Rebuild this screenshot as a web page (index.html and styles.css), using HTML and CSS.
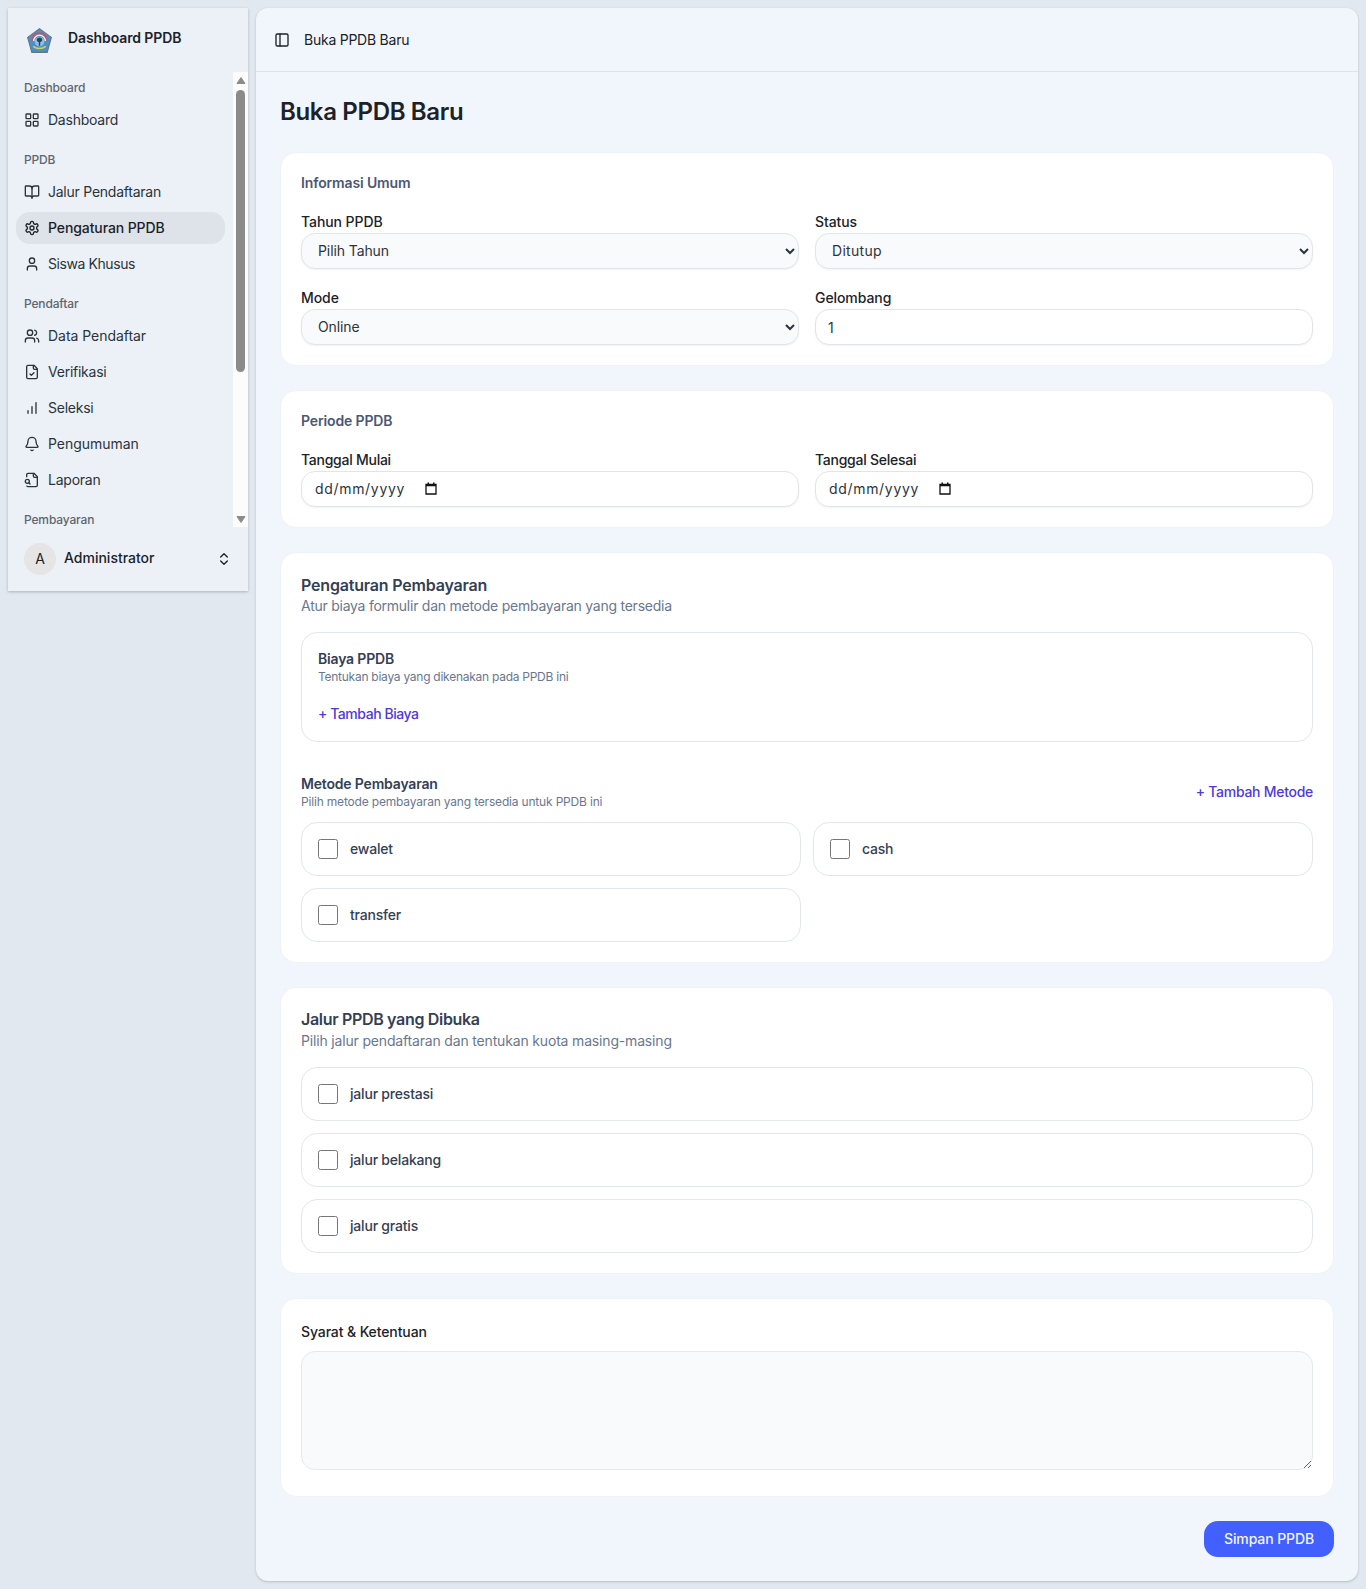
FILE: index.html
```html
<!DOCTYPE html>
<html lang="id">
<head>
<meta charset="utf-8">
<title>Buka PPDB Baru</title>
<link rel="stylesheet" href="styles.css">
</head>
<body>
<div class="app">
  <aside class="sidebar">
    <div class="brand">
      <svg class="brand-logo" viewBox="0 0 24 24"><path d="M12 .6 23.4 9 19.4 23.4H4.6L.6 9Z" fill="#4f8fc4" stroke="#65747f" stroke-width="1"/><path d="M5 12a7 7 0 0 1 14 0" fill="none" stroke="#c8525f" stroke-width="1.7"/><path d="M6.4 12.5a5.6 5.6 0 0 1 11.2 0" fill="none" stroke="#eef3f8" stroke-width="1.3"/><circle cx="12" cy="13" r="4.6" fill="#8fc1e6"/><path d="M12 9c2 0 2.800 1.300 2.600 2.800-.2 1.200-1.200 1.600-1.900 1.700V17h-1.400v-3.500c-.8-.1-1.700-.5-1.900-1.700C9.200 10.300 10 9 12 9Z" fill="#214a55"/><path d="M6 17.600c3.500 2.800 8.500 2.800 12 0" fill="none" stroke="#c5d75d" stroke-width="1.500"/></svg>
      <span class="brand-name">Dashboard PPDB</span>
    </div>
    <div class="nav-wrap">
      <nav class="nav">
        <section class="group">
          <h2 class="group-label">Dashboard</h2>
          <a class="item"><svg class="icon" viewBox="0 0 24 24"><rect width="7" height="7" x="3" y="3" rx="1"/><rect width="7" height="7" x="14" y="3" rx="1"/><rect width="7" height="7" x="14" y="14" rx="1"/><rect width="7" height="7" x="3" y="14" rx="1"/></svg><span>Dashboard</span></a>
        </section>
        <section class="group">
          <h2 class="group-label">PPDB</h2>
          <a class="item"><svg class="icon" viewBox="0 0 24 24"><path d="M12 7v14"/><path d="M3 18a1 1 0 0 1-1-1V4a1 1 0 0 1 1-1h5a4 4 0 0 1 4 4 4 4 0 0 1 4-4h5a1 1 0 0 1 1 1v13a1 1 0 0 1-1 1h-6a3 3 0 0 0-3 3 3 3 0 0 0-3-3z"/></svg><span>Jalur Pendaftaran</span></a>
          <a class="item active"><svg class="icon" viewBox="0 0 24 24"><path d="M12.220 2h-.44a2 2 0 0 0-2 2v.18a2 2 0 0 1-1 1.730l-.43.25a2 2 0 0 1-2 0l-.15-.08a2 2 0 0 0-2.730.730l-.22.38a2 2 0 0 0 .73 2.730l.15.1a2 2 0 0 1 1 1.720v.51a2 2 0 0 1-1 1.740l-.15.09a2 2 0 0 0-.73 2.730l.22.38a2 2 0 0 0 2.730.73l.15-.08a2 2 0 0 1 2 0l.43.25a2 2 0 0 1 1 1.730V20a2 2 0 0 0 2 2h.44a2 2 0 0 0 2-2v-.18a2 2 0 0 1 1-1.730l.43-.25a2 2 0 0 1 2 0l.15.08a2 2 0 0 0 2.730-.73l.22-.39a2 2 0 0 0-.73-2.730l-.15-.08a2 2 0 0 1-1-1.740v-.5a2 2 0 0 1 1-1.740l.15-.09a2 2 0 0 0 .73-2.730l-.22-.38a2 2 0 0 0-2.730-.73l-.15.08a2 2 0 0 1-2 0l-.43-.25a2 2 0 0 1-1-1.730V4a2 2 0 0 0-2-2z"/><circle cx="12" cy="12" r="3"/></svg><span>Pengaturan PPDB</span></a>
          <a class="item"><svg class="icon" viewBox="0 0 24 24"><path d="M19 21v-2a4 4 0 0 0-4-4H9a4 4 0 0 0-4 4v2"/><circle cx="12" cy="7" r="4"/></svg><span class="tight">Siswa Khusus</span></a>
        </section>
        <section class="group">
          <h2 class="group-label">Pendaftar</h2>
          <a class="item"><svg class="icon" viewBox="0 0 24 24"><path d="M16 21v-2a4 4 0 0 0-4-4H6a4 4 0 0 0-4 4v2"/><circle cx="9" cy="7" r="4"/><path d="M22 21v-2a4 4 0 0 0-3-3.870"/><path d="M16 3.130a4 4 0 0 1 0 7.750"/></svg><span class="loose">Data Pendaftar</span></a>
          <a class="item"><svg class="icon" viewBox="0 0 24 24"><path d="M15 2H6a2 2 0 0 0-2 2v16a2 2 0 0 0 2 2h12a2 2 0 0 0 2-2V7Z"/><path d="M14 2v4a2 2 0 0 0 2 2h4"/><path d="m9 15 2 2 4-4"/></svg><span>Verifikasi</span></a>
          <a class="item"><svg class="icon" viewBox="0 0 24 24"><path d="M12 20V10"/><path d="M18 20V4"/><path d="M6 20v-4"/></svg><span>Seleksi</span></a>
          <a class="item"><svg class="icon" viewBox="0 0 24 24"><path d="M10.268 21a2 2 0 0 0 3.464 0"/><path d="M3.262 15.326A1 1 0 0 0 4 17h16a1 1 0 0 0 .74-1.673C19.410 13.956 18 12.499 18 8A6 6 0 0 0 6 8c0 4.499-1.411 5.956-2.738 7.326"/></svg><span class="loose">Pengumuman</span></a>
          <a class="item"><svg class="icon" viewBox="0 0 24 24"><path d="M14 2v4a2 2 0 0 0 2 2h4"/><path d="M4.268 21a2 2 0 0 0 1.727 1H18a2 2 0 0 0 2-2V7l-5-5H6a2 2 0 0 0-2 2v3"/><path d="m9 18-1.500-1.500"/><circle cx="5" cy="14" r="3"/></svg><span>Laporan</span></a>
        </section>
        <section class="group">
          <h2 class="group-label">Pembayaran</h2>
        </section>
      </nav>
      <div class="scrollbar">
        <svg class="arrow" viewBox="0 0 10 8"><path d="M5 1 9 7H1Z"/></svg>
        <div class="thumb"></div>
        <svg class="arrow" viewBox="0 0 10 8"><path d="M5 7 9 1H1Z"/></svg>
      </div>
    </div>
    <div class="account">
      <span class="avatar">A</span>
      <span class="account-name">Administrator</span>
      <svg class="icon" viewBox="0 0 24 24"><path d="m7 15 5 5 5-5"/><path d="m7 9 5-5 5 5"/></svg>
    </div>
  </aside>

  <main class="main">
    <header class="topbar">
      <svg class="icon" viewBox="0 0 24 24"><rect width="18" height="18" x="3" y="3" rx="2"/><path d="M9 3v18"/></svg>
      <span class="crumb">Buka PPDB Baru</span>
    </header>
    <form class="content">
      <h1 class="page-title">Buka PPDB Baru</h1>

      <section class="card">
        <h2 class="card-label">Informasi Umum</h2>
        <div class="fields">
          <label class="field"><span>Tahun PPDB</span><select class="control select"><option>Pilih Tahun</option></select></label>
          <label class="field"><span>Status</span><select class="control select wide"><option>Ditutup</option></select></label>
          <label class="field"><span>Mode</span><select class="control select"><option>Online</option></select></label>
          <label class="field"><span>Gelombang</span><input class="control" type="text" value="1"></label>
        </div>
      </section>

      <section class="card">
        <h2 class="card-label">Periode PPDB</h2>
        <div class="fields dates">
          <div class="field"><span>Tanggal Mulai</span><div class="control date"><span class="date-text">dd/mm/yyyy</span><svg class="calendar" viewBox="0 0 12 13"><path d="M1 2.500h10v9.500H1Z" fill="none" stroke="#111" stroke-width="1.300"/><path d="M1 2h10v2.200H1ZM2.500.5h1.500V2H2.500ZM8 .5h1.500V2H8Z" fill="#111"/></svg></div></div>
          <div class="field"><span>Tanggal Selesai</span><div class="control date"><span class="date-text">dd/mm/yyyy</span><svg class="calendar" viewBox="0 0 12 13"><path d="M1 2.500h10v9.500H1Z" fill="none" stroke="#111" stroke-width="1.300"/><path d="M1 2h10v2.200H1ZM2.500.5h1.500V2H2.500ZM8 .5h1.500V2H8Z" fill="#111"/></svg></div></div>
        </div>
      </section>

      <section class="card">
        <h2 class="card-title">Pengaturan Pembayaran</h2>
        <p class="card-sub">Atur biaya formulir dan metode pembayaran yang tersedia</p>
        <div class="fee-box">
          <h3 class="sub-title">Biaya PPDB</h3>
          <p class="sub-text fee-text">Tentukan biaya yang dikenakan pada PPDB ini</p>
          <a class="link fee-link">+ Tambah Biaya</a>
        </div>
        <div class="method-head">
          <div>
            <h3 class="sub-title">Metode Pembayaran</h3>
            <p class="sub-text">Pilih metode pembayaran yang tersedia untuk PPDB ini</p>
          </div>
          <a class="link">+ Tambah Metode</a>
        </div>
        <div class="methods">
          <label class="choice"><input type="checkbox"><span>ewalet</span></label>
          <label class="choice"><input type="checkbox"><span>cash</span></label>
          <label class="choice"><input type="checkbox"><span>transfer</span></label>
        </div>
      </section>

      <section class="card">
        <h2 class="card-title track-title">Jalur PPDB yang Dibuka</h2>
        <p class="card-sub track-sub">Pilih jalur pendaftaran dan tentukan kuota masing-masing</p>
        <div class="tracks">
          <label class="choice"><input type="checkbox"><span>jalur prestasi</span></label>
          <label class="choice"><input type="checkbox"><span>jalur belakang</span></label>
          <label class="choice"><input type="checkbox"><span>jalur gratis</span></label>
        </div>
      </section>

      <section class="card terms">
        <label class="terms-label" for="terms">Syarat &amp; Ketentuan</label>
        <textarea class="terms-input" id="terms"></textarea>
      </section>

      <button class="submit" type="button">Simpan PPDB</button>
    </form>
  </main>
</div>
</body>
</html>
```
FILE: styles.css
```css
* { box-sizing: border-box; margin: 0; }

body {
  background: #e2e8ef;
  color: #1c2228;
  font: 14px/20px Inter, "Liberation Sans", sans-serif;
}

.app {
  display: flex;
  align-items: flex-start;
  gap: 8px;
  padding: 8px;
}

.icon {
  flex: none;
  width: 16px;
  height: 16px;
  fill: none;
  stroke: currentColor;
  stroke-width: 2;
  stroke-linecap: round;
  stroke-linejoin: round;
}

/* Sidebar */
.sidebar {
  display: flex;
  flex-direction: column;
  flex: none;
  width: 240px;
  height: 583px;
  background: #ebf1f7;
  box-shadow: 0 1px 3px rgb(0 0 0 / .16), 0 1px 2px rgb(0 0 0 / .08);
}
.brand {
  display: flex;
  gap: 15px;
  height: 64px;
  padding: 20px 20px 0;
}
.brand-logo { width: 25px; height: 25px; margin-left: -1px; margin-right: 1px; }
.brand-name { font-weight: 600; letter-spacing: -.1px; }
.nav-wrap { display: flex; height: 455px; }
.nav { flex: 1; overflow: hidden; }
.group {
  display: flex;
  flex-direction: column;
  gap: 4px;
  padding: 0 8px 8px;
}
.group-label {
  height: 28px;
  padding: 0 8px;
  color: #5f666d;
  font-size: 12px;
  font-weight: 500;
  letter-spacing: -.15px;
  line-height: 32px;
}
.item {
  display: flex;
  align-items: center;
  gap: 8px;
  height: 32px;
  padding: 0 8px;
  border-radius: 14px;
  color: #2c343b;
  letter-spacing: -.24px;
}
.item.active { background: #dde3e9; color: #1c2228; font-weight: 500; letter-spacing: -.1px; }
.item .tight { letter-spacing: -.42px; }
.item .loose { letter-spacing: -.04px; }
.scrollbar {
  display: flex;
  flex-direction: column;
  align-items: center;
  width: 15px;
  padding: 4px 0 3px;
  background: #fcfcfc;
}
.arrow { flex: none; width: 10px; height: 9px; fill: #8b8b8b; stroke: #8b8b8b; stroke-linejoin: round; }
.thumb { flex: none; width: 9px; height: 282px; margin: 5px 0 143px; border-radius: 5px; background: #8b8b8b; }
.account {
  display: flex;
  align-items: center;
  height: 64px;
  padding: 0 16px;
}
.avatar {
  width: 32px;
  border-radius: 50%;
  background: #e5e5e5;
  line-height: 32px;
  text-align: center;
}
.account-name { flex: 1; margin: -2px 0 0 8px; font-weight: 500; }

/* Main panel */
.main {
  flex: 1;
  height: 1573px;
  border-radius: 12px;
  background: #f1f6fd;
  box-shadow: 0 1px 3px rgb(0 0 0 / .14), 0 1px 2px rgb(0 0 0 / .06);
}
.topbar {
  display: flex;
  align-items: center;
  gap: 14px;
  height: 64px;
  padding: 0 18px;
  border-bottom: 1px solid #dde3e8;
}
.crumb { letter-spacing: -.24px; }
.content {
  display: flex;
  flex-direction: column;
  gap: 24px;
  padding: 24px;
}
.page-title { height: 32px; font-size: 24px; font-weight: 600; letter-spacing: -.33px; line-height: 32px; }

.card {
  padding: 20px;
  border: 1px solid #eef3f8;
  border-radius: 16px;
  background: #fff;
}
.card-label { margin-bottom: 18px; color: #4b5874; font-size: 14px; font-weight: 600; letter-spacing: -.14px; line-height: 20px; }
.fields { display: grid; grid-template-columns: 1fr 1fr; gap: 18px 16px; }
.field { display: flex; flex-direction: column; gap: 1px; font-weight: 500; letter-spacing: -.08px; line-height: 21px; }
.dates .field { letter-spacing: -.26px; }
.control {
  width: 100%;
  height: 36px;
  padding: 0 12px;
  border: 1px solid #e2e5e8;
  border-radius: 14px;
  background: #fff;
  box-shadow: 0 1px 2px rgb(0 0 0 / .05);
  color: #2c343b;
  font: 14px/20px Inter, "Liberation Sans", sans-serif;
}
.select { padding-bottom: 1px; background: #f9fafc; letter-spacing: -.1px; }
.select.wide { letter-spacing: .3px; }
.date { display: flex; align-items: center; gap: 20px; padding: 0 13px; }
.date-text { letter-spacing: .68px; }
.calendar { width: 12px; height: 13px; margin-top: -2px; }

.card-title { color: #334056; font-size: 16px; font-weight: 600; letter-spacing: -.19px; line-height: 24px; }
.card-sub { margin: -1px 0 16px; color: #6a7790; letter-spacing: -.25px; }
.track-title { margin-top: -1px; letter-spacing: -.32px; }
.track-sub { margin-top: 0; letter-spacing: -.17px; }
.fee-box {
  height: 110px;
  margin-bottom: 32px;
  padding: 16px;
  border: 1px solid #e2e7eb;
  border-radius: 16px;
}
.sub-title { color: #334056; font-size: 14px; font-weight: 600; letter-spacing: -.18px; line-height: 20px; }
.sub-text { color: #6a7790; font-size: 12px; letter-spacing: -.18px; line-height: 16px; }
.fee-text { margin-bottom: 19px; letter-spacing: -.26px; }
.link { color: #4f39dc; font-weight: 500; letter-spacing: -.28px; }
.fee-link { letter-spacing: -.45px; }
.method-head {
  display: flex;
  align-items: center;
  justify-content: space-between;
  height: 36px;
  margin-bottom: 12px;
}
.methods { display: grid; grid-template-columns: 1fr 1fr; gap: 12px; }
.tracks { display: grid; gap: 12px; }
.choice {
  display: flex;
  align-items: center;
  gap: 12px;
  height: 54px;
  padding: 0 16px;
  border: 1px solid #e2e7eb;
  border-radius: 16px;
  color: #334056;
  font-weight: 500;
  letter-spacing: -.2px;
}
.choice input { width: 20px; height: 20px; margin: 0; }

.terms { display: flex; flex-direction: column; height: 199px; }
.terms-label { height: 32px; padding-top: 3px; font-weight: 500; letter-spacing: -.11px; }
.terms-input {
  height: 119px;
  border: 1px solid #e6e9ec;
  border-radius: 14px;
  background: #f9fafc;
  resize: vertical;
}
.submit {
  align-self: flex-end;
  width: 130px;
  height: 36px;
  padding: 0;
  border: 0;
  border-radius: 14px;
  background: #425fff;
  color: #f3f6ff;
  font: 500 14px/20px Inter, "Liberation Sans", sans-serif;
  letter-spacing: -.1px;
}
```
